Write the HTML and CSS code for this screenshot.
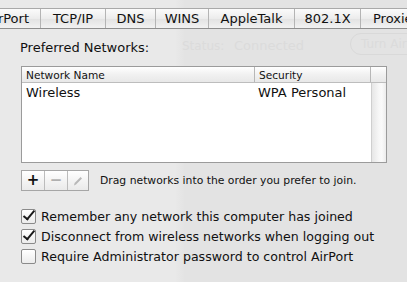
FILE: index.html
```html
<!DOCTYPE html>
<html lang="en">
<head>
    <meta charset="UTF-8">
    <title>AirPort Preferences</title>
    <link rel="stylesheet" href="styles.css">
</head>
<body>
    <div class="window">
        <div class="ghost">
            <span class="ghost-status">Status:</span>
            <span class="ghost-value">Connected</span>
            <span class="ghost-button">Turn AirPort Off</span>
        </div>

        <div class="tabs">
            <div class="tab tab-first">AirPort</div>
            <div class="tab tab-tcp">TCP/IP</div>
            <div class="tab tab-dns">DNS</div>
            <div class="tab tab-wins">WINS</div>
            <div class="tab tab-apple">AppleTalk</div>
            <div class="tab tab-8021x">802.1X</div>
            <div class="tab tab-proxies">Proxies</div>
        </div>

        <div class="content">
            <div class="section-label">Preferred Networks:</div>

            <div class="net-table">
                <div class="net-head">
                    <div class="col-name">Network Name</div>
                    <div class="col-sec">Security</div>
                    <div class="col-scroll"></div>
                </div>
                <div class="net-body">
                    <div class="net-rows">
                        <div class="net-row">
                            <div class="col-name">Wireless</div>
                            <div class="col-sec">WPA Personal</div>
                        </div>
                    </div>
                    <div class="scroll-track"></div>
                </div>
            </div>

            <div class="list-tools">
                <div class="tool-buttons">
                    <div class="tool-btn btn-add">+</div>
                    <div class="tool-btn btn-remove">&minus;</div>
                    <div class="tool-btn btn-edit">
                        <svg width="12" height="12" viewBox="0 0 12 12">
                            <path d="M2 10.5 L2.6 8 L8.6 2 L10 3.4 L4 9.4 Z" fill="#b8b8b8"/>
                        </svg>
                    </div>
                </div>
                <span class="tool-hint">Drag networks into the order you prefer to join.</span>
            </div>

            <div class="options">
                <label class="option"><span class="check checked"></span>Remember any network this computer has joined</label>
                <label class="option"><span class="check checked"></span>Disconnect from wireless networks when logging out</label>
                <label class="option"><span class="check"></span>Require Administrator password to control AirPort</label>
            </div>
        </div>
    </div>
</body>
</html>
```

FILE: styles.css
```css
body {
    margin: 0;
    font-family: "DejaVu Sans", "Noto Sans", sans-serif;
    color: #111;
}
.window {
    position: relative;
    width: 407px;
    height: 282px;
    overflow: hidden;
    background: linear-gradient(to right, #e9e9e9 0, #e9e9e9 175px, #e3e3e3 185px, #e3e3e3 100%);
    padding-top: 8px;
    box-sizing: border-box;
}

/* faint sheet showing through behind the panel */
.ghost {
    position: absolute;
    top: 33px;
    left: 182px;
    right: 0;
    color: #dbdbdb;
    font-size: 12px;
}
.ghost-status {
    position: absolute;
    left: 0;
    top: 6px;
}
.ghost-value {
    position: absolute;
    left: 52px;
    top: 5px;
    font-size: 13px;
}
.ghost-button {
    position: absolute;
    left: 168px;
    top: 0;
    padding: 3px 10px;
    border: 1px solid #d9d9d9;
    border-radius: 11px;
    white-space: nowrap;
}

.tabs {
    position: relative;
    display: flex;
    height: 19px;
    margin-left: -14px;
    border-top: 1px solid #a9a9a9;
    border-bottom: 1px solid #8e8e8e;
    background: linear-gradient(#fbfbfb, #ececec 50%, #e2e2e2 51%, #f2f2f2);
}
.tab {
    display: flex;
    align-items: center;
    justify-content: center;
    font-size: 13px;
    border-right: 1px solid #b4b4b4;
    white-space: nowrap;
    flex-shrink: 0;
}
.tab-first { width: 55px; justify-content: flex-end; padding-right: 11px; box-sizing: border-box; }
.tab-tcp { width: 64px; }
.tab-dns { width: 49px; }
.tab-wins { width: 52px; }
.tab-apple { width: 85px; }
.tab-8021x { width: 65px; }
.tab-proxies { width: 70px; justify-content: flex-start; padding-left: 12px; border-right: 0; }

.content {
    position: relative;
    padding-left: 21px;
}
.section-label {
    font-size: 13px;
    margin: 11px 0 0 -1px;
    height: 17px;
}

.net-table {
    margin-top: 9px;
    width: 366px;
    height: 97px;
    border: 1px solid #9b9b9b;
    box-sizing: border-box;
    background: #fff;
    display: flex;
    flex-direction: column;
}
.net-head {
    display: flex;
    height: 15px;
    font-size: 10.6px;
    background: linear-gradient(#ffffff, #f1f1f1 50%, #e8e8e8);
    border-bottom: 1px solid #bdbdbd;
}
.net-head > div {
    display: flex;
    align-items: center;
    border-right: 1px solid #b7b7b7;
}
.col-name {
    width: 233px;
    padding-left: 4px;
    box-sizing: border-box;
}
.col-sec {
    width: 116px;
    padding-left: 4px;
    box-sizing: border-box;
}
.net-head .col-scroll {
    flex: 1;
    border-right: 0;
}
.net-body {
    flex: 1;
    display: flex;
}
.net-rows {
    width: 349px;
}
.net-row {
    display: flex;
    height: 18px;
    align-items: center;
    font-size: 13px;
}
.net-row .col-sec {
    padding-left: 3px;
}
.scroll-track {
    flex: 1;
    border-left: 1px solid #cfcfcf;
    background: linear-gradient(to right, #e6e6e6, #f7f7f7 50%, #fafafa 70%, #ececec);
}

.list-tools {
    display: flex;
    align-items: center;
    margin-top: 7px;
    height: 21px;
}
.tool-buttons {
    display: flex;
    height: 21px;
    border: 1px solid #a6a6a6;
    box-sizing: border-box;
    background: linear-gradient(#ffffff, #f4f4f4 50%, #eaeaea);
}
.tool-btn {
    width: 22px;
    display: flex;
    align-items: center;
    justify-content: center;
    border-right: 1px solid #bcbcbc;
    font-size: 15px;
    font-weight: bold;
    line-height: 1;
}
.btn-add { color: #111; }
.btn-remove { color: #b0b0b0; }
.btn-edit { width: 20px; border-right: 0; }
.tool-hint {
    margin-left: 11px;
    font-size: 10.8px;
}

.options {
    margin-top: 15px;
}
.option {
    display: flex;
    align-items: center;
    height: 20px;
    font-size: 12.6px;
}
.check {
    width: 13px;
    height: 13px;
    margin-right: 5px;
    border: 1px solid #8a8a8a;
    border-radius: 2px;
    background: linear-gradient(#ffffff, #ececec);
    position: relative;
    flex-shrink: 0;
}
.check.checked::after {
    content: "";
    position: absolute;
    left: 4px;
    top: -2px;
    width: 4px;
    height: 10px;
    border-right: 2px solid #1a1a1a;
    border-bottom: 2px solid #1a1a1a;
    transform: rotate(40deg);
}
```
